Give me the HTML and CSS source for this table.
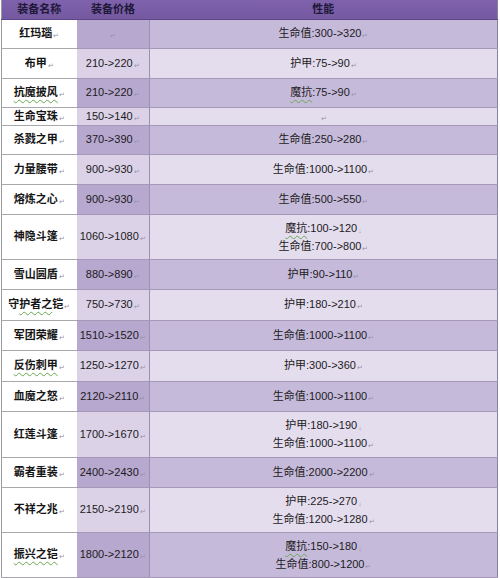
FILE: index.html
```html
<!DOCTYPE html>
<html lang="zh-CN">
<head>
<meta charset="utf-8">
<title>装备调整</title>
<link rel="stylesheet" href="styles.css">
</head>
<body>
<table class="gear">
  <colgroup>
    <col class="c-name">
    <col class="c-price">
    <col class="c-stat">
  </colgroup>
  <thead>
    <tr class="head">
      <th class="h-name">装备名称</th>
      <th class="h-price">装备价格</th>
      <th class="h-stat">性能</th>
    </tr>
  </thead>
  <tbody>
    <tr class="r odd h29"><td class="name">红玛瑙<i class="pm">↵</i></td><td class="price"><i class="pm">↵</i></td><td class="stat">生命值:300-&gt;320<i class="pm">↵</i></td></tr>
    <tr class="r even h30"><td class="name">布甲<i class="pm">↵</i></td><td class="price">210-&gt;220<i class="pm">↵</i></td><td class="stat">护甲:75-&gt;90<i class="pm">↵</i></td></tr>
    <tr class="r odd h29"><td class="name"><span class="sq">抗魔披风</span><i class="pm">↵</i></td><td class="price">210-&gt;220<i class="pm">↵</i></td><td class="stat"><span class="sq">魔抗</span>:75-&gt;90<i class="pm">↵</i></td></tr>
    <tr class="r even h18"><td class="name">生命宝珠<i class="pm">↵</i></td><td class="price">150-&gt;140<i class="pm">↵</i></td><td class="stat"><i class="pm">↵</i></td></tr>
    <tr class="r odd h29"><td class="name">杀戮之甲<i class="pm">↵</i></td><td class="price">370-&gt;390<i class="pm">↵</i></td><td class="stat">生命值:250-&gt;280<i class="pm">↵</i></td></tr>
    <tr class="r even h30"><td class="name">力量腰带<i class="pm">↵</i></td><td class="price">900-&gt;930<i class="pm">↵</i></td><td class="stat">生命值:1000-&gt;1100<i class="pm">↵</i></td></tr>
    <tr class="r odd h30"><td class="name">熔炼之心<i class="pm">↵</i></td><td class="price">900-&gt;930<i class="pm">↵</i></td><td class="stat">生命值:500-&gt;550<i class="pm">↵</i></td></tr>
    <tr class="r even h45"><td class="name">神隐斗篷<i class="pm">↵</i></td><td class="price">1060-&gt;1080<i class="pm">↵</i></td><td class="stat"><span class="sq">魔抗</span>:100-&gt;120<i class="pm">↓</i><br>生命值:700-&gt;800<i class="pm">↵</i></td></tr>
    <tr class="r odd h30"><td class="name">雪山圆盾<i class="pm">↵</i></td><td class="price">880-&gt;890<i class="pm">↵</i></td><td class="stat">护甲:90-&gt;110<i class="pm">↵</i></td></tr>
    <tr class="r even h31"><td class="name">守<span class="sq">护者之</span>铠<i class="pm">↵</i></td><td class="price">750-&gt;730<i class="pm">↵</i></td><td class="stat">护甲:180-&gt;210<i class="pm">↵</i></td></tr>
    <tr class="r odd h30"><td class="name">军团荣耀<i class="pm">↵</i></td><td class="price">1510-&gt;1520<i class="pm">↵</i></td><td class="stat">生命值:1000-&gt;1100<i class="pm">↵</i></td></tr>
    <tr class="r even h31"><td class="name"><span class="sq">反伤刺甲</span><i class="pm">↵</i></td><td class="price">1250-&gt;1270<i class="pm">↵</i></td><td class="stat">护甲:300-&gt;360<i class="pm">↵</i></td></tr>
    <tr class="r odd h30"><td class="name">血魔之怒<i class="pm">↵</i></td><td class="price">2120-&gt;2110<i class="pm">↵</i></td><td class="stat">生命值:1000-&gt;1100<i class="pm">↵</i></td></tr>
    <tr class="r even h46"><td class="name">红莲斗篷<i class="pm">↵</i></td><td class="price">1700-&gt;1670<i class="pm">↵</i></td><td class="stat">护甲:180-&gt;190<i class="pm">↓</i><br>生命值:1000-&gt;1100<i class="pm">↵</i></td></tr>
    <tr class="r odd h30"><td class="name">霸者重装<i class="pm">↵</i></td><td class="price">2400-&gt;2430<i class="pm">↵</i></td><td class="stat">生命值:2000-&gt;2200<i class="pm">↵</i></td></tr>
    <tr class="r even h45"><td class="name">不祥之兆<i class="pm">↵</i></td><td class="price">2150-&gt;2190<i class="pm">↵</i></td><td class="stat">护甲:225-&gt;270<i class="pm">↓</i><br>生命值:1200-&gt;1280<i class="pm">↵</i></td></tr>
    <tr class="r odd h45"><td class="name"><span class="sq">振兴之铠</span><i class="pm">↵</i></td><td class="price">1800-&gt;2120<i class="pm">↵</i></td><td class="stat"><span class="sq">魔抗</span>:150-&gt;180<i class="pm">↓</i><br>生命值:800-&gt;1200<i class="pm">↵</i></td></tr>
  </tbody>
</table>
</body>
</html>
```

FILE: styles.css
```css
html, body {
  margin: 0;
  padding: 0;
  background: #ffffff;
}

body {
  font-family: "Liberation Sans", "Noto Sans CJK SC", sans-serif;
  font-size: 11px;
  color: #1c1a22;
  overflow: hidden;
  height: 578px;
}

.gear {
  border-collapse: collapse;
  table-layout: fixed;
  width: 497px;
  margin-left: 1px;
  border-left: 1px solid #9a9a9e;
  border-right: 1px solid #8c7fa6;
}

.c-name { width: 75px; }
.c-price { width: 73px; }
.c-stat { width: auto; }

.head {
  height: 19px;
  background: linear-gradient(#7f62ac, #7458a0);
}

.head th {
  padding: 0;
  font-weight: bold;
  font-size: 11px;
  line-height: 16px;
  color: #1d1838;
  border-bottom: 1px solid #5e4789;
}

.h-name { text-align: center; }
.h-price { text-align: center; }
.h-stat { text-align: center; }

.r td {
  padding: 0;
  text-align: center;
  vertical-align: middle;
  line-height: 17px;
  border-bottom: 1px solid #a497b8;
}

.r td.name {
  background: #ffffff;
  font-weight: bold;
  color: #151515;
  border-bottom: 1px solid #a9a9ad;
}

.r td.price {
  border-right: 1px solid #9c8fb3;
}

.odd td.price { background: #b7a8cf; }
.odd td.stat { background: #c6badb; }
.even td.price { background: #dbd2e8; }
.even td.stat { background: #e4ddee; }

.h18 { height: 17px; }
.h29 { height: 29px; }
.h30 { height: 30px; }
.h31 { height: 31px; }
.h45 { height: 45px; }
.h46 { height: 46px; }

.h45 td.stat,
.h46 td.stat {
  line-height: 18px;
}

.pm {
  font-style: normal;
  font-weight: normal;
  font-size: 7px;
  line-height: 7px;
  color: #9a90a6;
  margin-left: 1px;
  vertical-align: -1px;
}

.sq {
  text-decoration: underline wavy #6aa84f;
  text-decoration-thickness: 1px;
  text-underline-offset: 3px;
}
```
